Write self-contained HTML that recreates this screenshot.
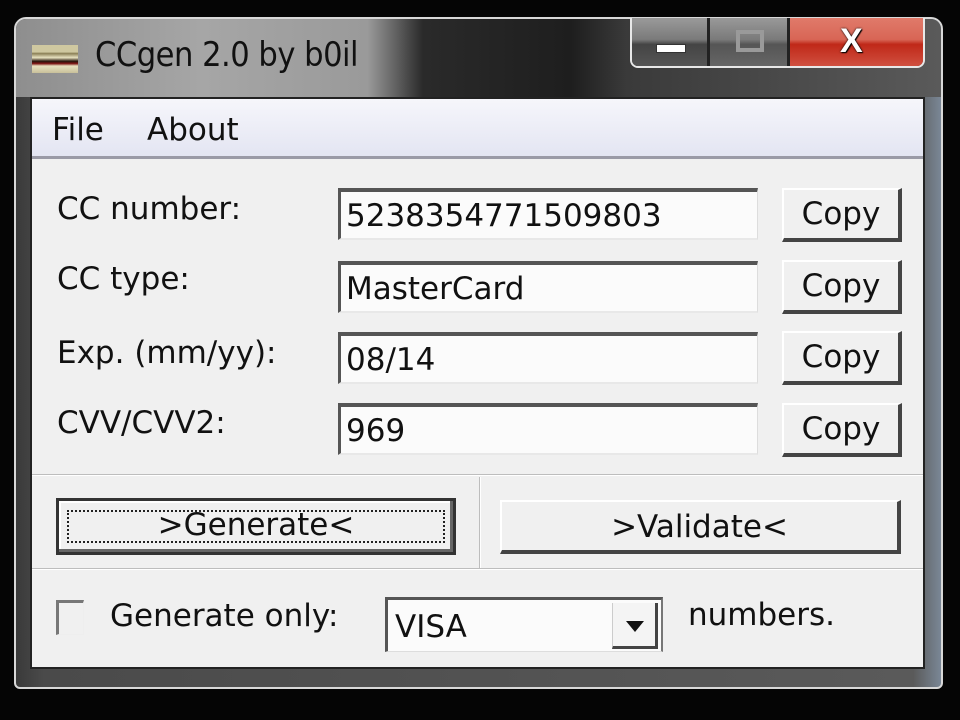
<!DOCTYPE html>
<html><head><meta charset="utf-8"><style>
*{margin:0;padding:0;box-sizing:border-box}
body{width:960px;height:720px;background:#050505;position:relative;overflow:hidden;font-family:"DejaVu Sans","Liberation Sans",sans-serif;color:#111}
.abs{position:absolute;white-space:nowrap}
#frame{left:14px;top:17px;width:929px;height:672px;border:2px solid #d8d8d8;border-radius:12px 12px 6px 6px;
background:linear-gradient(90deg,#3a3a3a 0,#4a4a4a 3%,#5a5a5a 97%,#7a8796 100%)}
#title{left:16px;top:19px;width:925px;height:78px;border-radius:10px 10px 0 0;
background:linear-gradient(90deg,#8e8e8e 0,#a6a6a6 20%,#9a9a9a 38%,#2a2a2a 44%,#1e1e1e 60%,#3a3a3a 66%,#5a5a5a 100%)}
.t{font-size:34px;letter-spacing:-0.5px;font-family:"DejaVu Sans Condensed",sans-serif}
#client{left:30px;top:97px;width:895px;height:572px;background:#f0f0f0;border:2px solid #222}
#menu{left:32px;top:99px;width:891px;height:60px;background:linear-gradient(#f6f6fb,#e3e5f2);border-bottom:3px solid #9a9aa6}
.lbl{font-size:31px}
.edit{background:#fbfbfb;border-top:4px solid #555;border-left:3px solid #555;border-right:1px solid #ddd;border-bottom:2px solid #e8e8e8;font-size:31px;padding:6px 0 0 5px;height:52px;width:420px;left:338px}
.btn{background:#f0f0f0;border-right:4px solid #444;border-bottom:4px solid #444;border-top:2px solid #fff;border-left:2px solid #fff;font-size:31px;text-align:center}
.sep{background:#bdbdbd;height:2px;border-bottom:1px solid #fff}
</style></head><body>
<div id="frame" class="abs"></div>
<div id="title" class="abs"></div>
<div class="abs" style="left:32px;top:45px;width:46px;height:28px;background:linear-gradient(#cfc8a0 0,#cfc8a0 25%,#8a7f55 30%,#e8e2c0 45%,#2a1a10 58%,#7a1010 66%,#e8e2c0 75%,#c8c09a 100%)"></div>
<div class="abs t" style="left:95px;top:35px">CCgen 2.0 by b0il</div>
<div class="abs" style="left:630px;top:18px;width:295px;height:50px;border:2px solid #e8e8e8;border-top:none;border-radius:0 0 8px 8px;background:#222"></div>
<div class="abs" style="left:632px;top:18px;width:75px;height:48px;background:linear-gradient(#9a9a9a,#7a7a7a 45%,#444 55%,#555);border-radius:0 0 0 6px"></div>
<div class="abs" style="left:656px;top:44px;width:30px;height:9px;background:#fff;border:1px solid #333"></div>
<div class="abs" style="left:710px;top:18px;width:77px;height:48px;background:linear-gradient(#999,#7a7a7a 45%,#555 55%,#666)"></div>
<div class="abs" style="left:736px;top:30px;width:28px;height:22px;border:4px solid #9a9a9a"></div>
<div class="abs" style="left:790px;top:18px;width:133px;height:48px;background:linear-gradient(#e07a6a,#d86555 45%,#c02818 55%,#d05040);border-radius:0 0 6px 0"></div>
<div class="abs" style="left:840px;top:22px;font-size:34px;font-weight:bold;color:#fff;font-family:'Liberation Sans',sans-serif;text-shadow:0 0 2px #000,1px 1px 1px #000">X</div>
<div id="client" class="abs"></div>
<div id="menu" class="abs"></div>
<div class="abs" style="left:52px;top:112px;font-size:31px">File</div>
<div class="abs" style="left:147px;top:112px;font-size:31px">About</div>
<div class="abs lbl" style="left:57px;top:191px">CC number:</div>
<div class="abs lbl" style="left:57px;top:261px">CC type:</div>
<div class="abs lbl" style="left:57px;top:335px">Exp. (mm/yy):</div>
<div class="abs lbl" style="left:57px;top:405px">CVV/CVV2:</div>
<div class="abs edit" style="top:188px">5238354771509803</div>
<div class="abs edit" style="top:261px">MasterCard</div>
<div class="abs edit" style="top:332px">08/14</div>
<div class="abs edit" style="top:403px">969</div>
<div class="abs btn" style="left:782px;top:188px;width:120px;height:54px;padding-top:6px">Copy</div>
<div class="abs btn" style="left:782px;top:260px;width:120px;height:54px;padding-top:6px">Copy</div>
<div class="abs btn" style="left:782px;top:331px;width:120px;height:54px;padding-top:6px">Copy</div>
<div class="abs btn" style="left:782px;top:403px;width:120px;height:54px;padding-top:6px">Copy</div>
<div class="abs sep" style="left:32px;top:474px;width:891px"></div>
<div class="abs" style="left:479px;top:477px;width:2px;height:92px;background:#bdbdbd;border-right:1px solid #fff"></div>
<div class="abs" style="left:56px;top:498px;width:400px;height:57px;border:3px solid #333;background:#f0f0f0;box-shadow:inset -3px -3px 0 #666,inset 2px 2px 0 #fff"></div>
<div class="abs" style="left:67px;top:510px;width:378px;height:33px;border:2px dotted #222;font-size:31px;text-align:center;line-height:27px">&gt;Generate&lt;</div>
<div class="abs btn" style="left:500px;top:500px;width:401px;height:54px;padding-top:7px">&gt;Validate&lt;</div>
<div class="abs sep" style="left:32px;top:568px;width:891px"></div>
<div class="abs" style="left:56px;top:600px;width:28px;height:35px;border-top:3px solid #777;border-left:3px solid #777;border-right:1px solid #eee;border-bottom:1px solid #eee;background:#f0f0f0"></div>
<div class="abs lbl" style="left:110px;top:598px">Generate only:</div>
<div class="abs" style="left:385px;top:597px;width:278px;height:55px;background:#fbfbfb;border-top:3px solid #555;border-left:3px solid #555;border-right:2px solid #777;border-bottom:1px solid #ddd"></div>
<div class="abs lbl" style="left:395px;top:609px">VISA</div>
<div class="abs" style="left:612px;top:603px;width:46px;height:46px;background:#f4f4f4;border-right:3px solid #444;border-bottom:3px solid #444;border-left:1px solid #ccc"></div>
<div class="abs" style="left:626px;top:621px;width:0;height:0;border-left:9px solid transparent;border-right:9px solid transparent;border-top:11px solid #111"></div>
<div class="abs lbl" style="left:688px;top:597px">numbers.</div>
</body></html>
